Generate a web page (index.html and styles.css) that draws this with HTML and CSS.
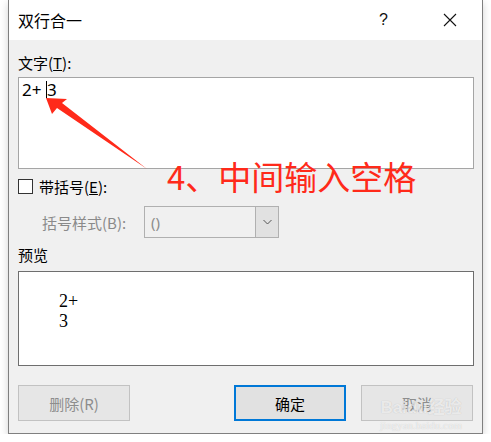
FILE: index.html
```html
<!DOCTYPE html>
<html lang="zh-CN">
<head>
    <meta charset="UTF-8">
    <meta name="viewport" content="width=device-width, initial-scale=1.0">
    <title>双行合一</title>
    <link rel="stylesheet" href="styles.css">
</head>
<body>
    <div class="dialog">
        <div class="title-bar">
            <span class="title">双行合一</span>
            <span class="help">?</span>
            <span class="close">
                <svg width="14" height="14" viewBox="0 0 14 14">
                    <path d="M1 1 L13 13 M13 1 L1 13" stroke="#111" stroke-width="1.1" fill="none"/>
                </svg>
            </span>
        </div>

        <div class="content">
            <div class="label">文字(<u>T</u>):</div>
            <div class="text-box">
                <span class="typed">2+ </span><span class="caret"></span><span class="typed">3</span>
            </div>

            <div class="check-row">
                <span class="checkbox"></span>
                <span class="check-label">带括号(<u>E</u>):</span>
            </div>

            <div class="select-row">
                <span class="select-label">括号样式(B):</span>
                <div class="select">
                    <span class="select-value">()</span>
                    <span class="select-button">
                        <svg width="9" height="6" viewBox="0 0 9 6">
                            <path d="M0.5 1 L4.5 5 L8.5 1" stroke="#555" stroke-width="1" fill="none"/>
                        </svg>
                    </span>
                </div>
            </div>

            <div class="label preview-label">预览</div>
            <div class="preview">
                <div class="preview-text">2+<br>3</div>
            </div>

            <div class="buttons">
                <button class="btn disabled">删除(R)</button>
                <div class="right-buttons">
                    <button class="btn primary">确定</button>
                    <button class="btn disabled">取消</button>
                </div>
            </div>
        </div>

        <!-- annotation drawn over the screenshot -->
        <svg class="arrow" width="491" height="442" viewBox="0 0 491 442">
            <polygon points="45,98 66,99 61,103 146,169 56,108 51,114" fill="#ff2a1a"/>
        </svg>
        <div class="note">4、中间输入空格</div>

        <div class="watermark">
            <div class="wm-logo">Bai<span class="paw">du</span>经验</div>
            <div class="wm-url">jingyan.baidu.com</div>
        </div>
    </div>
</body>
</html>
```

FILE: styles.css
```css
body {
    margin: 0;
    background-color: #ffffff;
    font-family: "Noto Sans CJK SC", "Noto Sans", sans-serif;
    color: #000;
}
.dialog {
    position: relative;
    margin-left: 8px;
    width: 473px;
    background-color: #f0f0f0;
    border-left: 1px solid #7f7f7f;
    border-right: 1px solid #7f7f7f;
    border-bottom: 1px solid #7f7f7f;
    box-shadow: 0 3px 8px rgba(0, 0, 0, 0.18);
}
.title-bar {
    height: 40px;
    background-color: #ffffff;
    display: flex;
    align-items: center;
    padding-left: 9px;
}
.title {
    font-size: 16px;
    flex: 1;
    margin-top: -1px;
}
.help {
    font-family: "Liberation Sans", sans-serif;
    font-size: 16px;
    color: #111;
    width: 20px;
    margin-right: 44px;
}
.close {
    width: 14px;
    height: 14px;
    display: flex;
    margin-right: 25px;
    margin-top: -1px;
}
.content {
    padding: 13px 8px 12px 9px;
}
.label {
    font-size: 15px;
    line-height: 20px;
}
.text-box {
    margin-top: 4px;
    height: 90px;
    background-color: #ffffff;
    border: 1px solid #a5a5a5;
    padding: 0 3px;
    display: flex;
    align-items: flex-start;
    font-family: "Noto Sans", sans-serif;
    font-size: 17px;
    line-height: 24px;
}
.typed {
    white-space: pre;
}
.caret {
    width: 1px;
    height: 17px;
    margin-top: 3px;
    background-color: #000;
}
.check-row {
    margin-top: 7px;
    height: 20px;
    display: flex;
    align-items: center;
}
.checkbox {
    width: 13px;
    height: 13px;
    border: 1px solid #333;
    background-color: #ffffff;
}
.check-label {
    font-size: 15px;
    margin-left: 6px;
}
.select-row {
    margin-top: 10px;
    display: flex;
    align-items: center;
    padding-left: 24px;
}
.select-label {
    font-size: 15px;
    color: #8a8a8a;
    width: 102px;
}
.select {
    width: 133px;
    height: 30px;
    border: 1px solid #b0b0b0;
    display: flex;
}
.select-value {
    flex: 1;
    padding-left: 6px;
    font-family: "Noto Sans", sans-serif;
    font-size: 15px;
    line-height: 30px;
    color: #8c8c8c;
}
.select-button {
    width: 22px;
    background-color: #e1e1e1;
    border-left: 1px solid #b0b0b0;
    display: flex;
    align-items: center;
    justify-content: center;
}
.preview-label {
    margin-top: 7px;
}
.preview {
    margin-top: 6px;
    height: 93px;
    background-color: #ffffff;
    border: 1px solid #6e6e6e;
}
.preview-text {
    font-family: "Liberation Serif", "Times New Roman", serif;
    font-size: 18px;
    line-height: 20px;
    padding: 19px 0 0 40px;
}
.buttons {
    margin-top: 19px;
    display: flex;
    justify-content: space-between;
}
.right-buttons {
    display: flex;
    gap: 15px;
    margin-right: 1px;
}
.btn {
    width: 112px;
    height: 36px;
    font-family: "Noto Sans CJK SC", sans-serif;
    font-size: 15px;
    background-color: #e1e1e1;
    border: 1px solid #adadad;
    padding: 0;
}
.btn.disabled {
    background-color: #e6e6e6;
    border-color: #c2c2c2;
    color: #8d8d8d;
}
.btn.primary {
    border: 2px solid #0078d7;
    color: #000;
}
.arrow {
    position: absolute;
    left: -8px;
    top: 0;
    pointer-events: none;
}
.note {
    position: absolute;
    left: 158px;
    top: 154px;
    font-size: 33px;
    line-height: 44px;
    color: #ff2a1a;
    white-space: nowrap;
}
.watermark {
    position: absolute;
    left: 366px;
    top: 398px;
    color: rgba(255, 255, 255, 0.7);
    text-shadow: 0 0 1px rgba(0, 0, 0, 0.2);
    text-align: center;
    width: 92px;
    pointer-events: none;
}
.wm-logo {
    font-family: "Liberation Sans", "Noto Sans CJK SC", sans-serif;
    font-weight: bold;
    font-size: 17px;
    line-height: 20px;
}
.wm-url {
    font-family: "Liberation Serif", serif;
    font-size: 11px;
    line-height: 14px;
}
```
